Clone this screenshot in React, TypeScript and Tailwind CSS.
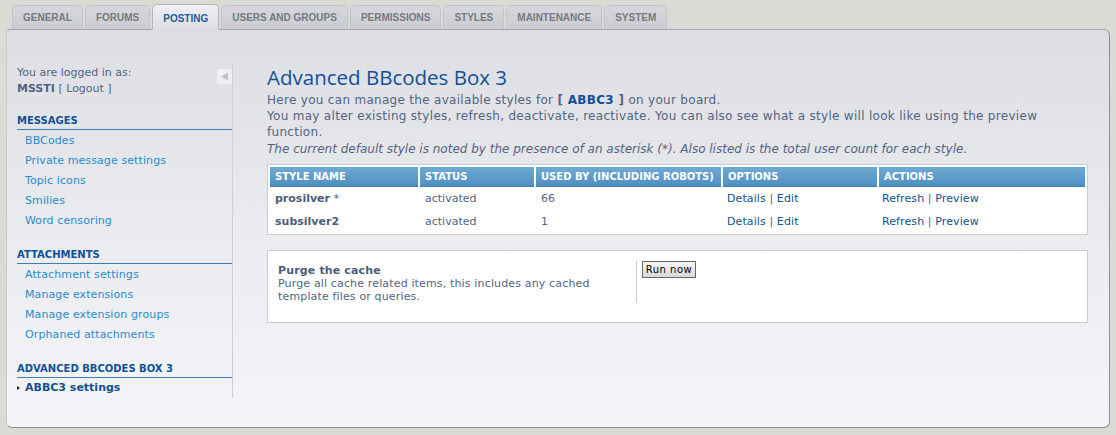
import React from 'react'

const tabs = ['General', 'Forums', 'Posting', 'Users and groups', 'Permissions', 'Styles', 'Maintenance', 'System']

const menu = [
  { title: 'Messages', links: ['BBCodes', 'Private message settings', 'Topic icons', 'Smilies', 'Word censoring'] },
  { title: 'Attachments', links: ['Attachment settings', 'Manage extensions', 'Manage extension groups', 'Orphaned attachments'] },
]

const styles = [
  { name: 'prosilver', star: true, count: '66' },
  { name: 'subsilver2', star: false, count: '1' },
]

const cols = 'grid grid-cols-[148px_114px_185px_154px_1fr] gap-x-[2px]'

export default function App() {
  return (
    <div className="min-h-[435px] bg-[#dcdad4] px-[6px] pt-[4px] pb-[7px] font-['DejaVu_Sans',Verdana,sans-serif] text-[11px] text-[#536482]">
      {/* tabs */}
      <div className="relative z-10 flex h-[25px] items-end gap-[2px] pl-[6px]">
        {tabs.map((t) => {
          const active = t === 'Posting'
          return (
            <div
              key={t}
              className={
                active
                  ? "-mb-px flex h-[26px] items-center rounded-t-[5px] border border-b-0 border-[#b4b6ba] bg-gradient-to-b from-[#eef0f3] to-[#dcdee3] px-[10px] pt-[1px] font-['Liberation_Sans',Arial,sans-serif] text-[10px] font-bold uppercase text-[#1d5c9b]"
                  : "flex h-[24px] items-center rounded-t-[5px] border border-b-0 border-[#c2c4c7] bg-gradient-to-b from-[#d6d8dc] to-[#caccd1] px-[10px] font-['Liberation_Sans',Arial,sans-serif] text-[10px] font-bold uppercase text-[#777a7e]"
              }
            >
              {t}
            </div>
          )
        })}
      </div>

      {/* panel */}
      <div className="flex h-[399px] rounded-b-[6px] rounded-tr-[6px] rounded-tl-[4px] border border-t-[#a3a5a8] border-l-[#c9cacc] border-r-[#8f9092] border-b-[#8f9092] bg-gradient-to-b from-[#dcdee3] via-[#e9ebee] to-[#f4f5f7] pl-[10px] pr-[21px] pt-[35px]">
        {/* sidebar */}
        <div className="flex h-[333px] w-[216px] shrink-0 flex-col border-r border-[#cfd0d3]">
          <div className="flex justify-between">
            <div className="leading-[16px]">
              <div>You are logged in as:</div>
              <div>
                <b>MSSTI</b> [ Logout ]
              </div>
            </div>
            <div className="mt-[4px] flex h-[15px] w-[15px] items-center justify-center rounded-l-[2px] bg-[#eeeff1]">
              <svg width="9" height="9" viewBox="0 0 9 9">
                <path d="M1 4.5 L8 0.5 L8 8.5 Z" fill="#c0c2c6" />
              </svg>
            </div>
          </div>

          {menu.map((m) => (
            <div key={m.title} className="mt-[16px]">
              <div className="border-b border-[#3b7fba] text-[10px] font-bold uppercase leading-[16px] text-[#115098]">
                {m.title}
              </div>
              <ul className="pt-[1px]">
                {m.links.map((l) => (
                  <li key={l} className="h-[20px] pl-[8px] leading-[20px] tracking-[0.1px] text-[#2b8bcf]">
                    {l}
                  </li>
                ))}
              </ul>
            </div>
          ))}

          <div className="mt-[16px]">
            <div className="border-b border-[#3b7fba] text-[10px] font-bold uppercase leading-[16px] text-[#115098]">
              Advanced BBcodes Box 3
            </div>
            <div className="flex h-[20px] items-center font-bold text-[#105289]">
              <svg width="8" height="20" viewBox="0 0 8 20" className="shrink-0">
                <path d="M0 8 L3 10 L0 12 Z" fill="#222" />
              </svg>
              <span className="leading-[20px]">ABBC3 settings</span>
            </div>
          </div>
        </div>

        {/* main */}
        <div className="ml-[34px] flex-1">
          <h1 className="font-['Open_Sans',sans-serif] text-[20.5px] leading-[24px] text-[#115098]">Advanced BBcodes Box 3</h1>
          <p className="mt-[3px] text-[12px] leading-[16px] tracking-[0.3px]">
            Here you can manage the available styles for <b className="text-[#115098]"><span className="text-[#536482]">[</span> ABBC3 <span className="text-[#536482]">]</span></b> on your board.
            <br />
            You may alter existing styles, refresh, deactivate, reactivate. You can also see what a style will look like using the preview function.
          </p>
          <p className="mt-[1px] text-[12px] italic leading-[16px]">
            The current default style is noted by the presence of an asterisk (*). Also listed is the total user count for each style.
          </p>

          {/* styles table */}
          <div className="mt-[7px] border border-[#cccccc] bg-white px-[2px] pt-[2px] pb-[1px]">
            <div className={cols}>
              {['Style name', 'Status', 'Used by (including robots)', 'Options', 'Actions'].map((h) => (
                <div
                  key={h}
                  className="h-[20px] border-b border-[#3f80b4] bg-gradient-to-b from-[#70aad4] to-[#4e90c2] pl-[5px] text-[10px] font-bold uppercase leading-[19px] text-white"
                >
                  {h}
                </div>
              ))}
            </div>
            {styles.map((s) => (
              <div key={s.name} className={cols + ' h-[23px] items-center pt-[1px]'}>
                <div className="pl-[5px] font-bold text-[#4c5d77]">
                  {s.name}
                  {s.star && <span className="font-normal"> *</span>}
                </div>
                <div className="pl-[5px]">activated</div>
                <div className="pl-[5px]">{s.count}</div>
                <div className="pl-[4px] tracking-[0.1px] text-[#105289]">
                  Details <span className="text-[#536482]">|</span> Edit
                </div>
                <div className="pl-[3px] tracking-[0.1px] text-[#105289]">
                  Refresh <span className="text-[#536482]">|</span> Preview
                </div>
              </div>
            ))}
          </div>

          {/* purge cache */}
          <div className="mt-[15px] flex h-[73px] border border-[#cccccc] bg-white pl-[10px] pt-[10px]">
            <div className="h-[42px] w-[359px] border-r border-[#cccccc] pt-[3px] leading-[13px] tracking-[0.15px]">
              <div className="font-bold text-[#4c5d77]">Purge the cache</div>
              <div>
                Purge all cache related items, this includes any cached
                <br />
                template files or queries.
              </div>
            </div>
            <div className="pl-[5px]">
              <button className="h-[17px] w-[54px] border border-[#666666] bg-gradient-to-b from-[#f6f6f6] to-[#d9d9d9] text-[10px] leading-[15px] tracking-[0.5px] text-black">
                Run now
              </button>
            </div>
          </div>
        </div>
      </div>
    </div>
  )
}
